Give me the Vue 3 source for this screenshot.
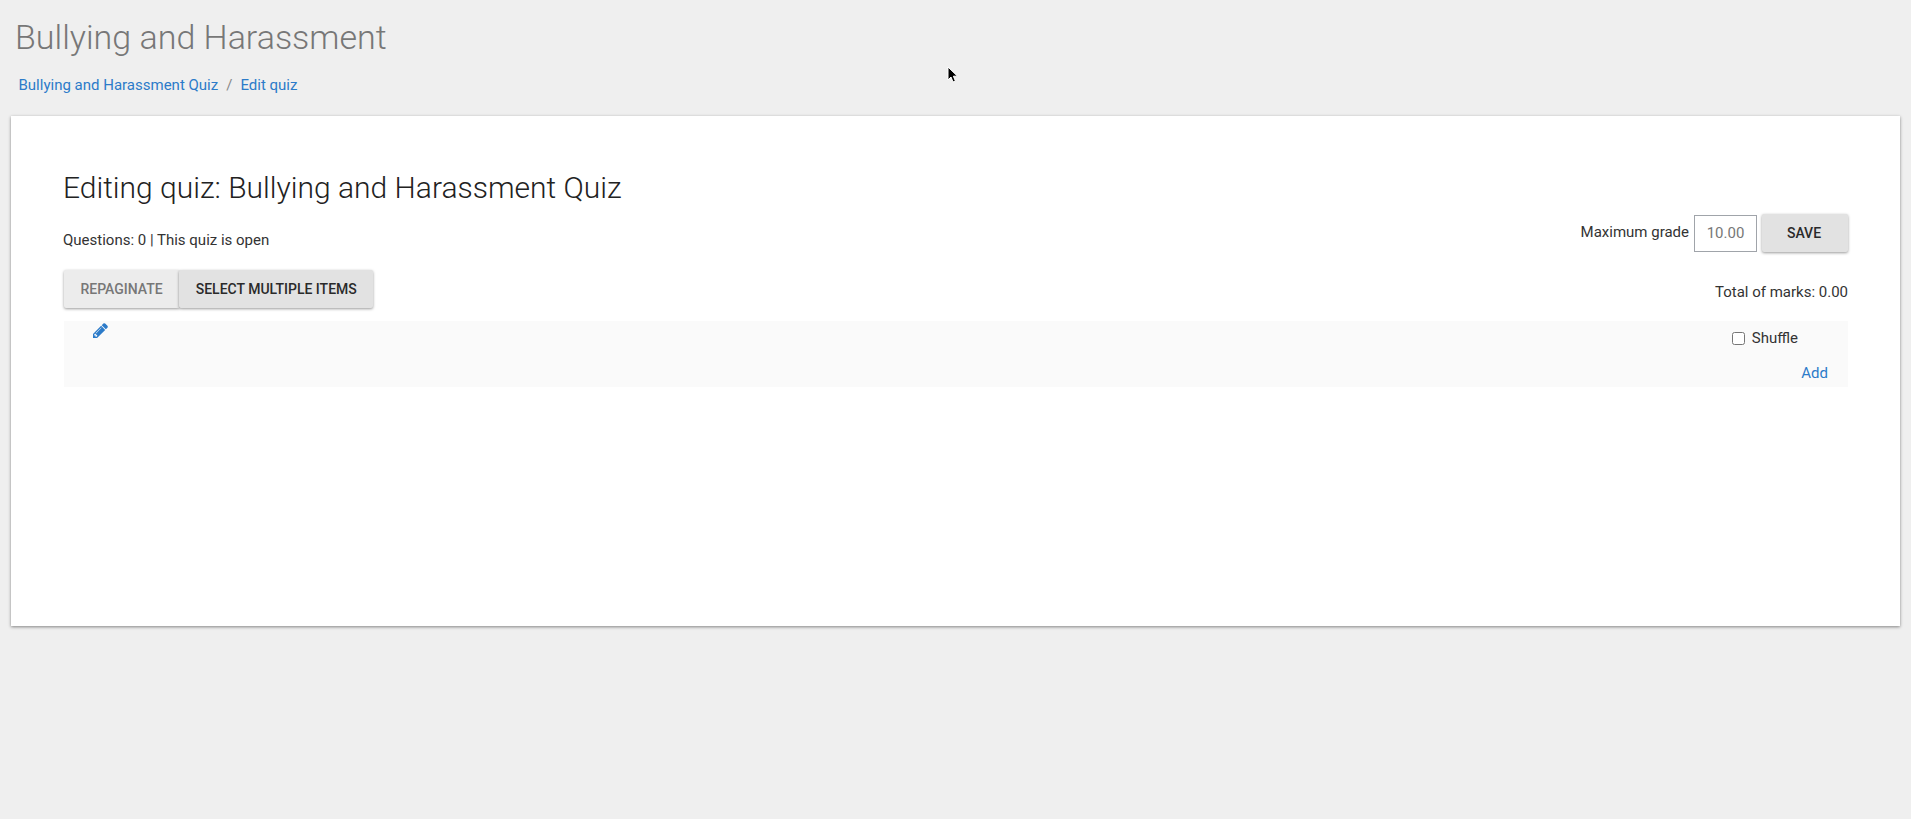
<script setup>
</script>

<template>
  <div class="page">
    <header class="head">
      <h1 class="site-title">Bullying and Harassment</h1>
      <nav class="crumbs">
        <a class="link">Bullying and Harassment Quiz</a>
        <span class="sep">/</span>
        <a class="link">Edit quiz</a>
      </nav>
    </header>
    <main class="card">
      <div class="top">
        <div class="top-left">
          <h2 class="title">Editing quiz: Bullying and Harassment Quiz</h2>
          <p class="status">Questions: 0 | This quiz is open</p>
          <div class="btn-group">
            <button class="btn btn-muted">REPAGINATE</button>
            <button class="btn btn-raised">SELECT MULTIPLE ITEMS</button>
          </div>
        </div>
        <div class="top-right">
          <div class="grade">
            <span class="grade-label">Maximum grade</span>
            <input class="grade-input" value="10.00" />
            <button class="btn btn-raised btn-save">SAVE</button>
          </div>
          <div class="marks">Total of marks: 0.00</div>
        </div>
      </div>
      <section class="section">
        <svg class="pencil" viewBox="128 128 1536 1536" width="15" height="15">
          <path fill="#2c7bc9" d="M491 1536l91-91-235-235-91 91v107h128v128h107zm523-928q0-22-22-22-10 0-17 7l-542 542q-7 7-7 17 0 22 22 22 10 0 17-7l542-542q7-7 7-17zm-54-192l416 416-832 832h-416v-416zm683 96q0 53-37 90l-166 166-416-416 166-165q36-38 90-38 53 0 91 38l235 234q37 39 37 91z" />
        </svg>
        <div class="section-side">
          <label class="shuffle"><input type="checkbox" class="check" /><span>Shuffle</span></label>
          <a class="link add">Add</a>
        </div>
      </section>
    </main>
    <svg class="cursor" viewBox="0 0 12 18" width="12" height="18">
      <path d="M1 1v13l3-3 2 5 2.400-1-2-4.800H10.500z" fill="#000" stroke="#fff" stroke-width="1" />
    </svg>
  </div>
</template>

<style>
html, body { margin: 0; background: #efefef; }
</style>

<style scoped>
.page {
  position: relative;
  min-height: 819px;
  box-sizing: border-box;
  padding: 0 11px;
  background: #efefef;
  font-family: Roboto, "Liberation Sans", sans-serif;
  font-size: 15px;
  color: #333;
  overflow: hidden;
}
.head { height: 116px; box-sizing: border-box; padding-top: 15px; }
.site-title {
  margin: 0 0 0 4px;
  font-size: 34px;
  line-height: 44px;
  font-weight: 300;
  color: #777;
}
.crumbs {
  margin: 16px 0 0 7.5px;
  display: flex;
  gap: 8px;
  line-height: 20px;
  font-size: 15px;
}
.sep { color: #888; }
.link { color: #2c7bc9; }
.card {
  height: 510px;
  box-sizing: border-box;
  background: #fff;
  padding: 53px 52px 0 53px;
  box-shadow: 0 1px 3px rgba(0, 0, 0, .45);
}
.top { display: flex; justify-content: space-between; }
.title {
  margin: -1px 0 0 -1px;
  font-size: 30px;
  line-height: 40px;
  font-weight: 300;
  color: #222;
}
.status { margin: 22px 0 0 -1px; font-size: 15px; line-height: 20px; color: #333; }
.btn-group { display: flex; margin-top: 20px; }
.btn {
  border: 0;
  border-radius: 2px;
  height: 38px;
  padding: 0 16.5px 1px;
  font: 500 14px Roboto, sans-serif;
  background: #e2e2e2;
  color: #2a2a2a;
  box-shadow: 0 1px 3px rgba(0, 0, 0, .4);
}
.btn-muted { background: #ececec; color: #777; border-radius: 2px 0 0 2px; }
.btn-raised { position: relative; }
.top-right { display: flex; flex-direction: column; align-items: flex-end; padding-top: 45px; }
.grade { display: flex; align-items: center; gap: 5px; }
.grade-label { margin-bottom: 2px; }
.grade-input {
  width: 63px;
  height: 37px;
  box-sizing: border-box;
  border: 1px solid #a0a4aa;
  padding: 0;
  text-align: center;
  font: 15px Roboto, sans-serif;
  color: #777;
  outline: 0;
}
.btn-save { width: 86px; padding: 0 2px 1px 0; height: 38px; }
.marks { margin-top: 30px; line-height: 20px; }
.section {
  margin-top: 13px;
  height: 66px;
  background: #fafafa;
  position: relative;
  display: flex;
  justify-content: space-between;
}
.pencil { margin: 2px 0 0 29px; }
.section-side {
  display: flex;
  flex-direction: column;
  align-items: flex-end;
  padding: 7px 20px 0 0;
}
.shuffle { display: flex; align-items: center; gap: 7px; margin-right: 30px; line-height: 20px; }
.check { margin: 0; width: 13px; height: 13px; }
.add { margin-top: 15px; line-height: 20px; }
.cursor { position: absolute; left: 947px; top: 66px; }
</style>
